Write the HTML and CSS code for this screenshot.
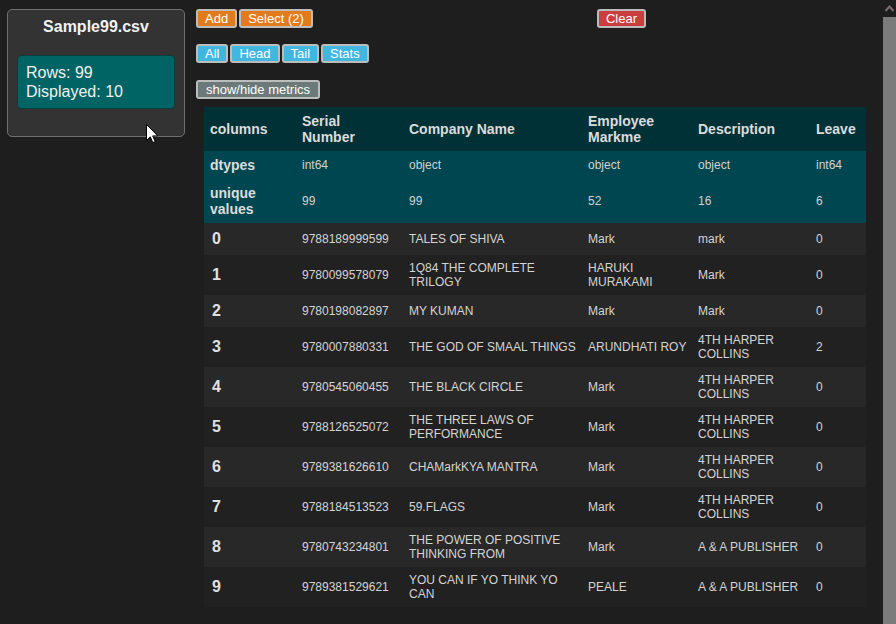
FILE: index.html
```html
<!DOCTYPE html>
<html lang="en">
<head>
<meta charset="utf-8">
<title>Sample99.csv</title>
<link rel="stylesheet" href="styles.css">
</head>
<body>
<div class="app">
  <aside class="sidebar">
    <div class="file-card">
      <div class="file-title">Sample99.csv</div>
      <div class="file-info">
        <div>Rows: 99</div>
        <div>Displayed: 10</div>
      </div>
    </div>
  </aside>

  <main class="main">
    <div class="toolbar toolbar-top">
      <div class="btn-group">
        <button class="btn btn-orange">Add</button>
        <button class="btn btn-orange">Select (2)</button>
      </div>
      <button class="btn btn-red">Clear</button>
    </div>
    <div class="toolbar toolbar-view">
      <div class="btn-group">
        <button class="btn btn-blue">All</button>
        <button class="btn btn-blue">Head</button>
        <button class="btn btn-blue">Tail</button>
        <button class="btn btn-blue">Stats</button>
      </div>
    </div>
    <div class="toolbar toolbar-metrics">
      <button class="btn btn-grey">show/hide metrics</button>
    </div>

    <table class="df">
      <colgroup>
        <col class="c-idx"><col class="c-serial"><col class="c-company"><col class="c-emp"><col class="c-desc"><col class="c-leave">
      </colgroup>
      <thead>
        <tr><th>columns</th><th>Serial Number</th><th>Company Name</th><th>Employee Markme</th><th>Description</th><th>Leave</th></tr>
      </thead>
      <tbody class="metrics">
        <tr><th>dtypes</th><td>int64</td><td>object</td><td>object</td><td>object</td><td>int64</td></tr>
        <tr><th>unique values</th><td>99</td><td>99</td><td>52</td><td>16</td><td>6</td></tr>
      </tbody>
      <tbody class="rows">
        <tr><th>0</th><td>9788189999599</td><td>TALES OF SHIVA</td><td>Mark</td><td>mark</td><td>0</td></tr>
        <tr><th>1</th><td>9780099578079</td><td>1Q84 THE COMPLETE TRILOGY</td><td>HARUKI MURAKAMI</td><td>Mark</td><td>0</td></tr>
        <tr><th>2</th><td>9780198082897</td><td>MY KUMAN</td><td>Mark</td><td>Mark</td><td>0</td></tr>
        <tr><th>3</th><td>9780007880331</td><td>THE GOD OF SMAAL THINGS</td><td>ARUNDHATI ROY</td><td>4TH HARPER COLLINS</td><td>2</td></tr>
        <tr><th>4</th><td>9780545060455</td><td>THE BLACK CIRCLE</td><td>Mark</td><td>4TH HARPER COLLINS</td><td>0</td></tr>
        <tr><th>5</th><td>9788126525072</td><td>THE THREE LAWS OF PERFORMANCE</td><td>Mark</td><td>4TH HARPER COLLINS</td><td>0</td></tr>
        <tr><th>6</th><td>9789381626610</td><td>CHAMarkKYA MANTRA</td><td>Mark</td><td>4TH HARPER COLLINS</td><td>0</td></tr>
        <tr><th>7</th><td>9788184513523</td><td>59.FLAGS</td><td>Mark</td><td>4TH HARPER COLLINS</td><td>0</td></tr>
        <tr><th>8</th><td>9780743234801</td><td>THE POWER OF POSITIVE THINKING FROM</td><td>Mark</td><td>A &amp; A PUBLISHER</td><td>0</td></tr>
        <tr><th>9</th><td>9789381529621</td><td>YOU CAN IF YO THINK YO CAN</td><td>PEALE</td><td>A &amp; A PUBLISHER</td><td>0</td></tr>
      </tbody>
    </table>
  </main>

  <div class="scrollbar">
    <div class="scroll-arrow">
      <svg width="9" height="7" viewBox="0 0 9 7"><path d="M0.5 6 L4.5 1.5 L8.5 6" fill="none" stroke="#7c6b72" stroke-width="2"/></svg>
    </div>
    <div class="scroll-thumb"></div>
  </div>
</div>

<svg class="cursor" width="13" height="20" viewBox="0 0 13 20">
  <path d="M0.5 0.5 L0.5 16.5 L4.3 12.8 L6.8 18.6 L9.2 17.6 L6.7 11.9 L11.8 11.9 Z" fill="#ffffff" stroke="#000000" stroke-width="1" stroke-linejoin="miter"/>
</svg>
</body>
</html>
```

FILE: styles.css
```css
* { box-sizing: border-box; }

html, body {
  margin: 0;
  padding: 0;
  background: #1e1e1e;
  overflow: hidden;
}

body {
  font-family: "Liberation Sans", Arial, sans-serif;
  color: #d8d8d8;
}

.app {
  display: flex;
  height: 624px;
  width: 896px;
}

/* ---------- sidebar ---------- */
.sidebar {
  padding: 9px 11px 0 7px;
  flex: none;
}

.file-card {
  width: 178px;
  height: 128px;
  background: #333333;
  border: 1px solid #707070;
  border-radius: 5px;
  padding: 7px 9px 0 9px;
}

.file-title {
  text-align: center;
  font-weight: bold;
  font-size: 16px;
  line-height: 20px;
  color: #f2f2f2;
  margin-bottom: 18px;
}

.file-info {
  background: #006464;
  border: 1px solid #0a3c40;
  border-radius: 4px;
  padding: 7px 8px 7px 8px;
  font-size: 16px;
  line-height: 19px;
  color: #f0f0f0;
  height: 54px;
}

/* ---------- main ---------- */
.main {
  flex: 1;
  padding-top: 9px;
  min-width: 0;
}

.toolbar {
  display: flex;
  height: 19px;
}

.toolbar-top {
  width: 450px;
  justify-content: space-between;
  margin-bottom: 16px;
}

.toolbar-view {
  margin-bottom: 17px;
}

.toolbar-metrics {
  margin-bottom: 8px;
}

.btn-group {
  display: flex;
  gap: 2px;
}

.btn {
  font-family: "Liberation Sans", Arial, sans-serif;
  font-size: 13px;
  line-height: 15px;
  height: 19px;
  padding: 0 7px;
  margin: 0;
  color: #ffffff;
  border: 2px solid #bcbcbc;
  border-radius: 3px;
  cursor: pointer;
}

.btn-orange { background: #e27b1c; }
.btn-red { background: #cc3d3f; }
.btn-blue { background: #41b6df; }
.btn-grey { background: #6b7979; padding: 0 8px; }

/* ---------- dataframe table ---------- */
.df {
  margin-left: 8px;
  width: 662px;
  table-layout: fixed;
  border-collapse: collapse;
  border-spacing: 0;
}

.c-idx { width: 92px; }
.c-serial { width: 107px; }
.c-company { width: 179px; }
.c-emp { width: 110px; }
.c-desc { width: 118px; }
.c-leave { width: 56px; }

.df th, .df td {
  text-align: left;
  vertical-align: middle;
}

.df thead th {
  background: #003137;
  color: #dcdcdc;
  font-size: 14px;
  line-height: 16px;
  font-weight: bold;
  padding: 6px 8px 6px 6px;
}

.metrics tr { background: #004650; }

.metrics th {
  font-size: 14px;
  line-height: 16px;
  font-weight: bold;
  color: #dcdcdc;
  padding: 6px 4px 6px 6px;
}

.metrics td {
  font-size: 12px;
  line-height: 14px;
  color: #d2d2d2;
  padding: 6px 2px 6px 6px;
}

.rows tr:nth-child(odd) { background: #282828; }
.rows tr:nth-child(even) { background: #212121; }

.rows th {
  font-size: 16px;
  line-height: 20px;
  font-weight: bold;
  color: #e0e0e0;
  padding: 6px 4px 6px 8px;
}

.rows td {
  font-size: 12px;
  line-height: 14px;
  color: #d4d4d4;
  padding: 6px 2px 6px 6px;
}

/* ---------- scrollbar ---------- */
.scrollbar {
  flex: none;
  width: 13px;
  display: flex;
  flex-direction: column;
}

.scroll-arrow {
  height: 17px;
  display: flex;
  justify-content: center;
  padding-top: 5px;
}

.scroll-thumb {
  flex: 1;
  background: #7b7b7b;
}

/* mouse pointer overlay */
.cursor {
  position: absolute;
  left: 146px;
  top: 124px;
}
```
